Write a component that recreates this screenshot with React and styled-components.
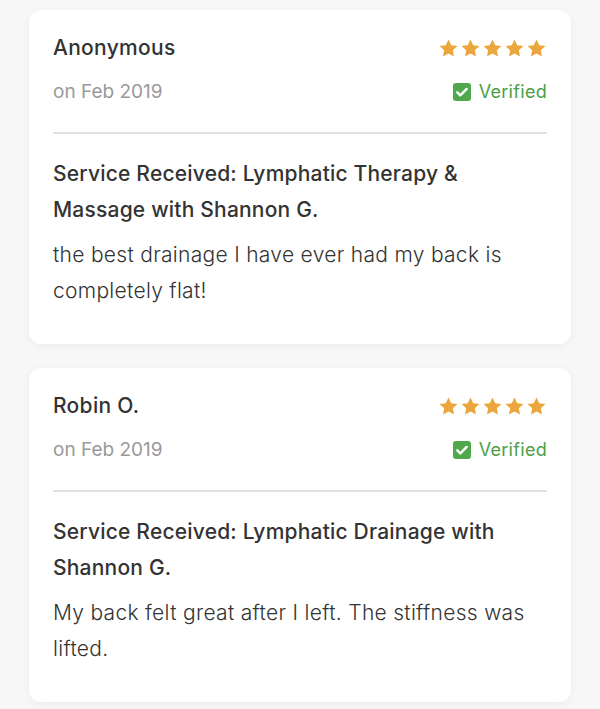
import React from 'react';
import styled, { createGlobalStyle } from 'styled-components';

const REVIEWS = [
  {
    name: 'Anonymous',
    date: 'on Feb 2019',
    service: 'Service Received: Lymphatic Therapy & Massage with Shannon G.',
    body: 'the best drainage I have ever had my back is completely flat!',
  },
  {
    name: 'Robin O.',
    date: 'on Feb 2019',
    service: 'Service Received: Lymphatic Drainage with Shannon G.',
    body: 'My back felt great after I left. The stiffness was lifted.',
  },
];

const GlobalStyle = createGlobalStyle`
  body {
    margin: 0;
    background: #f7f7f8;
    font-family: Inter, 'Open Sans', sans-serif;
    color: #333;
  }
`;

const List = styled.main`
  display: flex;
  flex-direction: column;
  gap: 24px;
  padding: 10px 29px;
`;

const Card = styled.article`
  background: #fff;
  border-radius: 12px;
  box-shadow: 0 2px 10px rgba(0, 0, 0, 0.05);
  padding: 26px 24px 35px;
`;

const Header = styled.div`
  display: flex;
  justify-content: space-between;
  align-items: flex-start;
`;

const Col = styled.div`
  display: flex;
  flex-direction: column;
  align-items: ${({ $end }) => ($end ? 'flex-end' : 'flex-start')};
  gap: 20px;
`;

const Name = styled.div`
  font-size: 21px;
  line-height: 24px;
  font-weight: 500;
  letter-spacing: 0.3px;
  color: #333;
`;

const Date = styled.div`
  font-size: 19px;
  line-height: 24px;
  color: #999;
`;

const Stars = styled.div`
  display: flex;
  gap: 1px;
  height: 24px;
  align-items: center;
`;

const Verified = styled.div`
  display: flex;
  align-items: center;
  gap: 8px;
  font-size: 18px;
  line-height: 24px;
  letter-spacing: 0.3px;
  color: #4a9f49;
`;

const Divider = styled.hr`
  border: 0;
  height: 2px;
  background: #e0e0e3;
  margin: 28px 0 22px;
`;

const Service = styled.h3`
  margin: 0;
  max-width: 480px;
  font-size: 21px;
  line-height: 36px;
  font-weight: 500;
  letter-spacing: 0.2px;
  color: #333;
`;

const Body = styled.p`
  margin: 9px 0 0;
  font-size: 21px;
  line-height: 36px;
  font-weight: 300;
  letter-spacing: 0.3px;
  color: #333;
`;

const Star = () => (
  <svg width="21" height="21" viewBox="0 0 24 24">
    <path
      fill="#eba73e"
      d="M12 1.8l3.1 6.5 7.1.9-5.2 4.9 1.3 7.1L12 17.8l-6.3 3.4 1.3-7.1-5.2-4.9 7.1-.9z"
    />
  </svg>
);

const Check = () => (
  <svg width="18" height="18" viewBox="0 0 18 18">
    <rect width="18" height="18" rx="3" fill="#4fa94c" />
    <path
      d="M4.3 9.3l3 3 6.4-6.4"
      fill="none"
      stroke="#fff"
      strokeWidth="2.4"
      strokeLinecap="round"
      strokeLinejoin="round"
    />
  </svg>
);

const App = () => (
  <>
    <GlobalStyle />
    <List>
      {REVIEWS.map((r) => (
        <Card key={r.name}>
          <Header>
            <Col>
              <Name>{r.name}</Name>
              <Date>{r.date}</Date>
            </Col>
            <Col $end>
              <Stars>
                {[0, 1, 2, 3, 4].map((i) => (
                  <Star key={i} />
                ))}
              </Stars>
              <Verified>
                <Check />
                Verified
              </Verified>
            </Col>
          </Header>
          <Divider />
          <Service>{r.service}</Service>
          <Body>{r.body}</Body>
        </Card>
      ))}
    </List>
  </>
);

export default App;
